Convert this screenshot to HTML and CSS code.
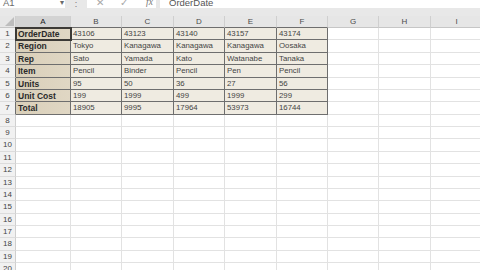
FILE: index.html
```html
<!DOCTYPE html>
<html lang="en">
<head>
    <meta charset="UTF-8">
    <meta name="viewport" content="width=device-width, initial-scale=1.0">
    <title>Book1 - Excel</title>
    <link rel="stylesheet" href="styles.css">
</head>
<body>
    <div class="top">
        <div class="namebox"><span>A1</span><span class="arrow">▾</span></div>
        <div class="dots">⋮</div>
        <div class="actions">
            <span>✕</span>
            <span>✓</span>
            <span class="fx">fx</span>
        </div>
        <div class="formula">OrderDate</div>
    </div>

    <table class="sheet">
        <colgroup>
            <col class="c-rh">
            <col class="c-a">
            <col class="c-51"><col class="c-52"><col class="c-51"><col class="c-52"><col class="c-51">
            <col class="c-51"><col class="c-52"><col class="c-52">
        </colgroup>
        <tr class="head">
            <th class="corner"><span class="tri"></span></th>
            <th class="t sel">A</th><th class="t">B</th><th class="t">C</th><th class="t">D</th><th class="t">E</th><th class="t">F</th>
            <th>G</th><th>H</th><th>I</th>
        </tr>
        <tr>
            <th class="rh t">1</th>
            <td class="d key active">OrderDate</td><td class="d">43106</td><td class="d">43123</td><td class="d">43140</td><td class="d">43157</td><td class="d">43174</td>
            <td></td><td></td><td></td>
        </tr>
        <tr class="tall">
            <th class="rh t">2</th>
            <td class="d key">Region</td><td class="d">Tokyo</td><td class="d">Kanagawa</td><td class="d">Kanagawa</td><td class="d">Kanagawa</td><td class="d">Oosaka</td>
            <td></td><td></td><td></td>
        </tr>
        <tr>
            <th class="rh t">3</th>
            <td class="d key">Rep</td><td class="d">Sato</td><td class="d">Yamada</td><td class="d">Kato</td><td class="d">Watanabe</td><td class="d">Tanaka</td>
            <td></td><td></td><td></td>
        </tr>
        <tr class="tall">
            <th class="rh t">4</th>
            <td class="d key">Item</td><td class="d">Pencil</td><td class="d">Binder</td><td class="d">Pencil</td><td class="d">Pen</td><td class="d">Pencil</td>
            <td></td><td></td><td></td>
        </tr>
        <tr>
            <th class="rh t">5</th>
            <td class="d key">Units</td><td class="d">95</td><td class="d">50</td><td class="d">36</td><td class="d">27</td><td class="d">56</td>
            <td></td><td></td><td></td>
        </tr>
        <tr>
            <th class="rh t">6</th>
            <td class="d key">Unit Cost</td><td class="d">199</td><td class="d">1999</td><td class="d">499</td><td class="d">1999</td><td class="d">299</td>
            <td></td><td></td><td></td>
        </tr>
        <tr class="tall">
            <th class="rh t">7</th>
            <td class="d key">Total</td><td class="d">18905</td><td class="d">9995</td><td class="d">17964</td><td class="d">53973</td><td class="d">16744</td>
            <td></td><td></td><td></td>
        </tr>
        <tr><th class="rh">8</th><td></td><td></td><td></td><td></td><td></td><td></td><td></td><td></td><td></td></tr>
        <tr><th class="rh">9</th><td></td><td></td><td></td><td></td><td></td><td></td><td></td><td></td><td></td></tr>
        <tr class="tall"><th class="rh">10</th><td></td><td></td><td></td><td></td><td></td><td></td><td></td><td></td><td></td></tr>
        <tr><th class="rh">11</th><td></td><td></td><td></td><td></td><td></td><td></td><td></td><td></td><td></td></tr>
        <tr class="tall"><th class="rh">12</th><td></td><td></td><td></td><td></td><td></td><td></td><td></td><td></td><td></td></tr>
        <tr><th class="rh">13</th><td></td><td></td><td></td><td></td><td></td><td></td><td></td><td></td><td></td></tr>
        <tr><th class="rh">14</th><td></td><td></td><td></td><td></td><td></td><td></td><td></td><td></td><td></td></tr>
        <tr class="tall"><th class="rh">15</th><td></td><td></td><td></td><td></td><td></td><td></td><td></td><td></td><td></td></tr>
        <tr><th class="rh">16</th><td></td><td></td><td></td><td></td><td></td><td></td><td></td><td></td><td></td></tr>
        <tr><th class="rh">17</th><td></td><td></td><td></td><td></td><td></td><td></td><td></td><td></td><td></td></tr>
        <tr class="tall"><th class="rh">18</th><td></td><td></td><td></td><td></td><td></td><td></td><td></td><td></td><td></td></tr>
        <tr><th class="rh">19</th><td></td><td></td><td></td><td></td><td></td><td></td><td></td><td></td><td></td></tr>
        <tr><th class="rh">20</th><td></td><td></td><td></td><td></td><td></td><td></td><td></td><td></td><td></td></tr>
    </table>
</body>
</html>
```

FILE: styles.css
```css
html, body {
    margin: 0;
    height: 100%;
    overflow: hidden;
}
body {
    font-family: "Liberation Sans", Arial, sans-serif;
    background: #ffffff;
    color: #222;
}
.top {
    display: flex;
    height: 16px;
    background: #e8e8e8;
    color: #6a6a6a;
    font-size: 9.5px;
}
.top > div {
    height: 8px;
    line-height: 5px;
    background: #ffffff;
    display: flex;
    align-items: flex-start;
}
.namebox {
    width: 65px;
    padding-left: 3px;
    box-sizing: border-box;
    justify-content: space-between;
}
.namebox .arrow {
    font-size: 8px;
    padding-right: 1px;
}
.top > .dots {
    background: transparent;
    width: 22px;
    justify-content: center;
    color: #888;
}
.actions {
    width: 69px;
    padding-left: 9px;
    gap: 16px;
    box-sizing: border-box;
    color: #a8a8a8;
}
.actions .fx {
    font-family: "Liberation Serif", serif;
    font-style: italic;
    color: #777;
    margin-left: 2px;
}
.formula {
    flex: 1;
    margin-left: 4px;
    padding-left: 9px;
    color: #555;
}
.sheet {
    border-collapse: separate;
    border-spacing: 0;
    table-layout: fixed;
    width: 483px;
}
.c-rh { width: 16px; }
.c-a { width: 55px; }
.c-51 { width: 51px; }
.c-52 { width: 52px; }
.sheet tr {
    height: 12px;
}
.sheet tr.tall {
    height: 13px;
}
.sheet td, .sheet th {
    padding: 0 0 0 2px;
    border-right: 1px solid #e2e2e2;
    border-bottom: 1px solid #e2e2e2;
    font-size: 7.8px;
    line-height: 10px;
    font-weight: normal;
    text-align: left;
    white-space: nowrap;
    overflow: hidden;
    box-sizing: border-box;
    color: #3a3a3a;
}
.sheet .head {
    height: 12px;
}
.head th {
    background: #e6e6e6;
    text-align: center;
    padding: 0;
    font-size: 8px;
    color: #4a4a4a;
    border-right: 1px solid #cfcfcf;
    border-bottom: 1px solid #c6c6c6;
}
.head th.sel {
    background: #d3d3d3;
    color: #222;
}
.head th.t {
    border-bottom-color: #6e6e6e;
}
.corner {
    vertical-align: bottom;
}
.tri {
    display: block;
    width: 0;
    height: 0;
    margin: 0 1px 1px auto;
    border-left: 9px solid transparent;
    border-bottom: 9px solid #bdbdbd;
}
.sheet th.rh {
    background: #f1f1f1;
    text-align: center;
    padding: 0;
    font-size: 8px;
    color: #444;
    border-right: 1px solid #cfcfcf;
    border-bottom: 1px solid #dcdcdc;
}
.sheet th.rh.t {
    border-right-color: #6e6e6e;
}
.sheet td.d {
    background: #efebe1;
    border-right: 1px solid #6e6e6e;
    border-bottom: 1px solid #6e6e6e;
    color: #444;
}
.sheet td.key {
    background: linear-gradient(90deg, #d9cfb9, #e0d7c4);
    font-weight: bold;
    font-size: 8.5px;
    color: #2a2a2a;
}
.sheet td.active {
    outline: 2px solid #3c3a36;
    outline-offset: -1px;
}
```
